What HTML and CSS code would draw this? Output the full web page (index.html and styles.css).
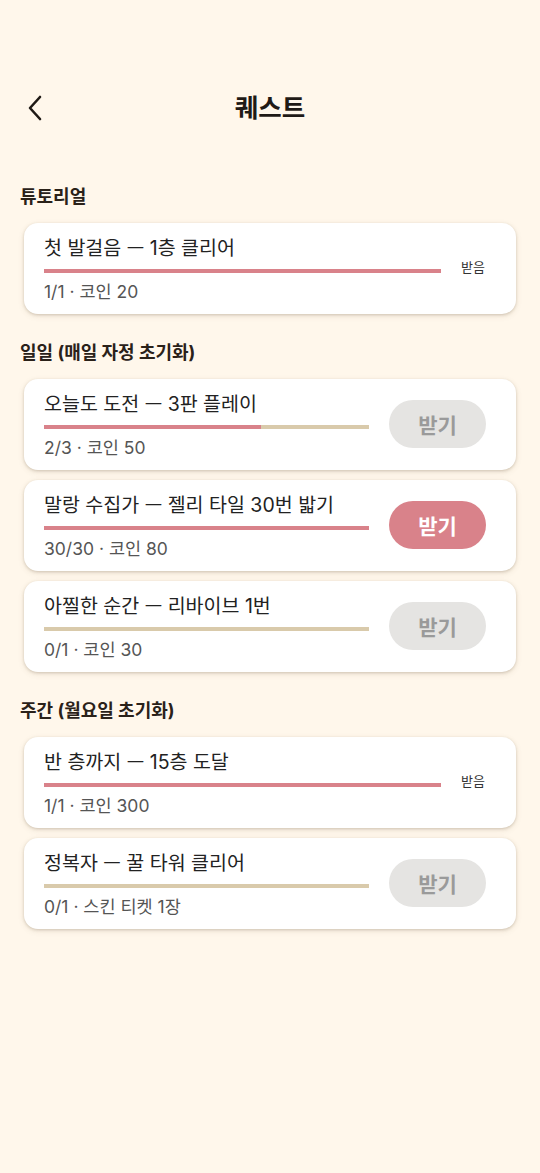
FILE: index.html
```html
<!DOCTYPE html>
<html lang="ko">
<head>
<meta charset="utf-8">
<title>퀘스트</title>
<link rel="stylesheet" href="styles.css">
</head>
<body>
<div class="screen">
  <header class="topbar">
    <button class="back" aria-label="뒤로">
      <svg width="18" height="28" viewBox="0 0 18 28"><path d="M14 3 L4 14 L14 25" fill="none" stroke="#1f1a16" stroke-width="2.6" stroke-linecap="round" stroke-linejoin="round"/></svg>
    </button>
    <h1 class="title">퀘스트</h1>
  </header>

  <main class="content">
    <h2 class="section">튜토리얼</h2>
    <div class="card">
      <div class="info">
        <div class="name">첫 발걸음 <span class="cjk">—</span> 1층 클리어</div>
        <div class="bar"><div class="fill" style="width:100%"></div></div>
        <div class="meta">1/1 · 코인 20</div>
      </div>
      <div class="done">받음</div>
    </div>

    <h2 class="section">일일 (매일 자정 초기화)</h2>
    <div class="list">
      <div class="card">
        <div class="info">
          <div class="name">오늘도 도전 <span class="cjk">—</span> 3판 플레이</div>
          <div class="bar"><div class="fill" style="width:66.7%"></div></div>
          <div class="meta">2/3 · 코인 50</div>
        </div>
        <button class="claim">받기</button>
      </div>
      <div class="card">
        <div class="info">
          <div class="name">말랑 수집가 <span class="cjk">—</span> 젤리 타일 30번 밟기</div>
          <div class="bar"><div class="fill" style="width:100%"></div></div>
          <div class="meta">30/30 · 코인 80</div>
        </div>
        <button class="claim active">받기</button>
      </div>
      <div class="card">
        <div class="info">
          <div class="name">아찔한 순간 <span class="cjk">—</span> 리바이브 1번</div>
          <div class="bar"><div class="fill" style="width:0%"></div></div>
          <div class="meta">0/1 · 코인 30</div>
        </div>
        <button class="claim">받기</button>
      </div>
    </div>

    <h2 class="section">주간 (월요일 초기화)</h2>
    <div class="list">
      <div class="card">
        <div class="info">
          <div class="name">반 층까지 <span class="cjk">—</span> 15층 도달</div>
          <div class="bar"><div class="fill" style="width:100%"></div></div>
          <div class="meta">1/1 · 코인 300</div>
        </div>
        <div class="done">받음</div>
      </div>
      <div class="card">
        <div class="info">
          <div class="name">정복자 <span class="cjk">—</span> 꿀 타워 클리어</div>
          <div class="bar"><div class="fill" style="width:0%"></div></div>
          <div class="meta">0/1 · 스킨 티켓 1장</div>
        </div>
        <button class="claim">받기</button>
      </div>
    </div>
  </main>
</div>
</body>
</html>
```

FILE: styles.css
```css
* { box-sizing: border-box; }
html, body {
  margin: 0;
  padding: 0;
  background: #fff7eb;
}
body {
  font-family: Inter, "Noto Sans CJK KR", sans-serif;
  color: #222;
}
.screen {
  min-height: 1173px;
  padding-top: 80px;
}
.topbar {
  position: relative;
  height: 56px;
  display: flex;
  align-items: center;
  justify-content: center;
}
.back {
  position: absolute;
  left: 26px;
  top: 14px;
  width: 18px;
  height: 28px;
  padding: 0;
  border: 0;
  background: none;
  display: flex;
}
.title {
  margin: 0;
  font-size: 25.5px;
  line-height: 32px;
  font-weight: 700;
  color: #1f1a16;
}
.content {
  padding: 49px 24px 0;
}
.section {
  margin: 0 0 14px -4px;
  font-size: 18px;
  line-height: 24px;
  font-weight: 700;
  color: #2a2119;
}
.card + .section, .list + .section {
  margin-top: 27px;
}
.list {
  display: flex;
  flex-direction: column;
  gap: 10px;
}
.card {
  background: #fff;
  border-radius: 14px;
  box-shadow: 0 1px 3px rgba(120, 100, 70, 0.28), 0 2px 6px rgba(120, 100, 70, 0.12);
  padding: 12px 30px 13px 20px;
  display: flex;
  align-items: center;
  gap: 20px;
  height: 91px;
}
.info {
  flex: 1;
  min-width: 0;
}
.name {
  font-size: 19.5px;
  line-height: 24px;
  color: #222;
  white-space: nowrap;
}
.cjk {
  font-family: "Noto Sans CJK KR", sans-serif;
}
.bar {
  height: 4px;
  margin: 9px 0;
  background: #d9caab;
}
.fill {
  height: 100%;
  background: #d9828a;
}
.meta {
  font-size: 17.5px;
  line-height: 20px;
  color: #555;
}
.done {
  font-size: 13px;
  line-height: 16px;
  color: #333;
  width: 25px;
  margin-top: -2px;
  white-space: nowrap;
}
.claim {
  width: 97px;
  height: 48px;
  border: 0;
  border-radius: 24px;
  background: #e5e4e2;
  color: #9a9a9a;
  font-family: inherit;
  font-size: 21px;
  font-weight: 700;
  padding: 0;
  flex: none;
}
.claim.active {
  background: #d9828a;
  color: #fff;
}
```
